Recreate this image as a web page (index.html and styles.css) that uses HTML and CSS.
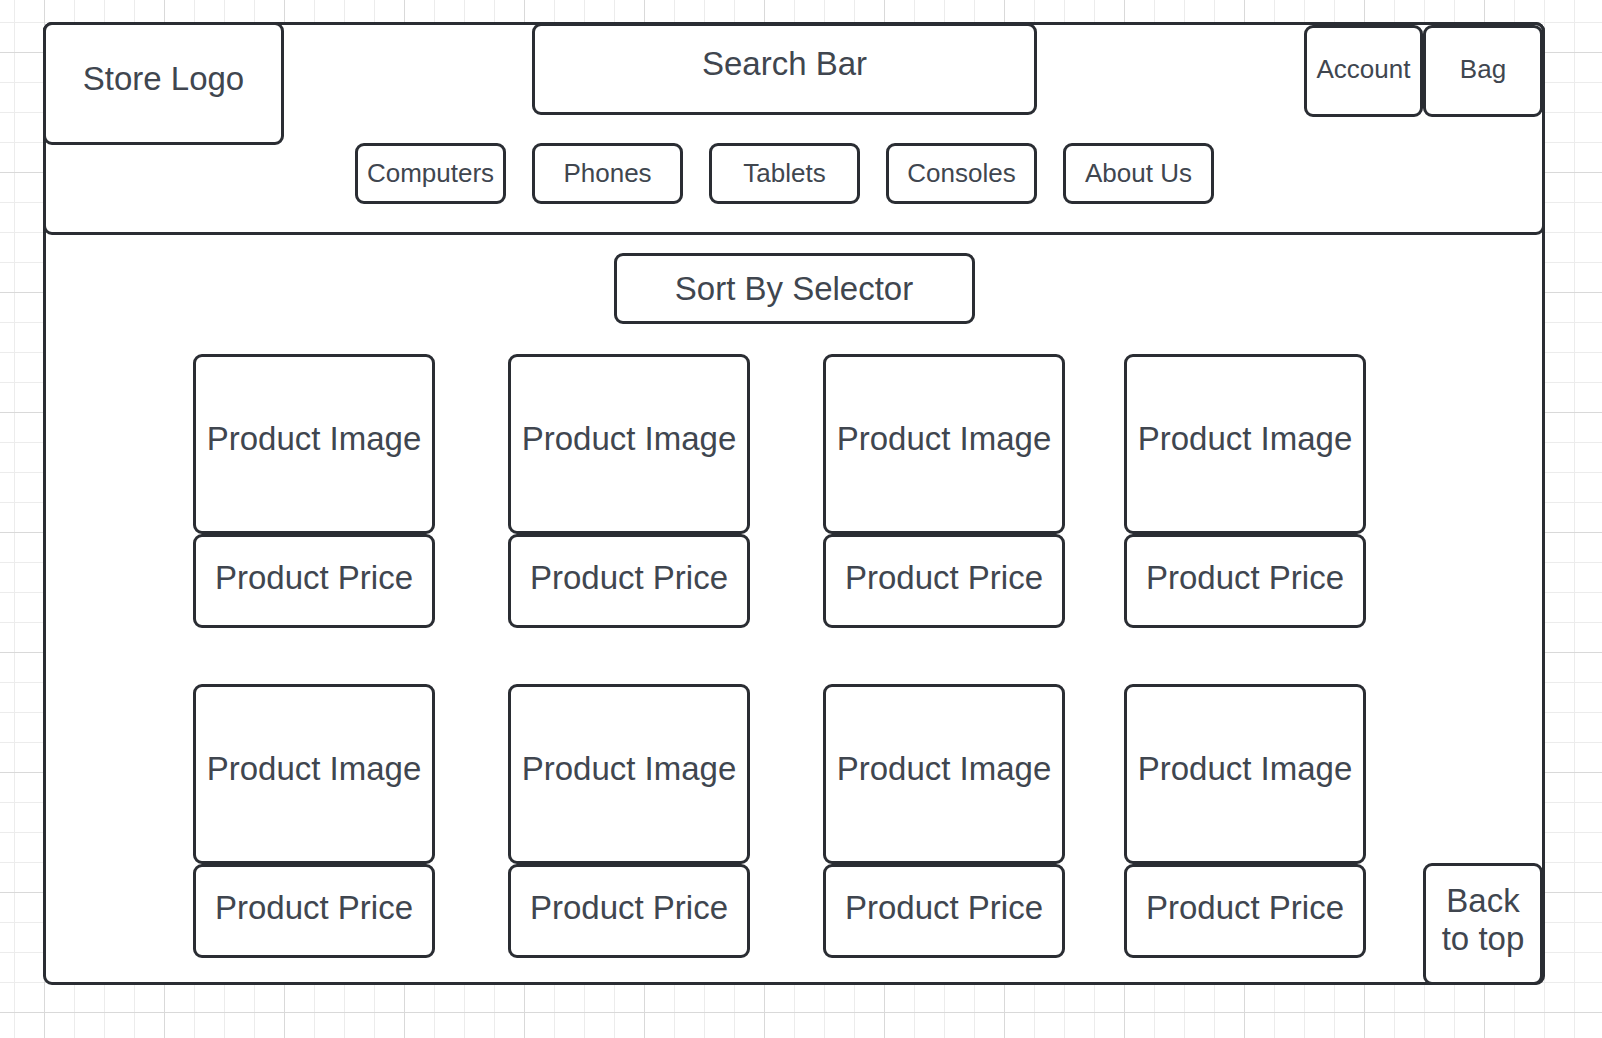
FILE: index.html
```html
<!DOCTYPE html>
<html lang="en">
<head>
  <meta charset="UTF-8" />
  <title>Store - Wireframe</title>
  <meta name="viewport" content="width=device-width, initial-scale=1" />
  <link rel="stylesheet" href="styles.css">
</head>
<body>

<div class="frame">
  <header class="header">
    <div class="top-row">
      <div class="box logo">Store Logo</div>
      <div class="box search">Search Bar</div>
      <div class="user-links">
        <div class="box small">Account</div>
        <div class="box small">Bag</div>
      </div>
    </div>
    <nav class="nav">
      <div class="box nav-item">Computers</div>
      <div class="box nav-item">Phones</div>
      <div class="box nav-item">Tablets</div>
      <div class="box nav-item">Consoles</div>
      <div class="box nav-item">About Us</div>
    </nav>
  </header>

  <div class="box sort">Sort By Selector</div>

  <div class="products">
    <div class="card"><div class="box card-image">Product Image</div><div class="box card-price">Product Price</div></div>
    <div class="card"><div class="box card-image">Product Image</div><div class="box card-price">Product Price</div></div>
    <div class="card"><div class="box card-image">Product Image</div><div class="box card-price">Product Price</div></div>
    <div class="card"><div class="box card-image">Product Image</div><div class="box card-price">Product Price</div></div>
    <div class="card"><div class="box card-image">Product Image</div><div class="box card-price">Product Price</div></div>
    <div class="card"><div class="box card-image">Product Image</div><div class="box card-price">Product Price</div></div>
    <div class="card"><div class="box card-image">Product Image</div><div class="box card-price">Product Price</div></div>
    <div class="card"><div class="box card-image">Product Image</div><div class="box card-price">Product Price</div></div>
  </div>

  <!-- floating button -->
  <div class="box back-top">Back<br>to top</div>
</div>

</body>
</html>
```

FILE: styles.css
```css
* { box-sizing: border-box; font-family: 'Liberation Sans', Arial, sans-serif; }
body {
  margin: 0;
  height: 100vh;
  overflow: hidden;
  background-color: #fff;
  background-image:
    linear-gradient(to right, #d9d9d9 1px, transparent 1px),
    linear-gradient(to bottom, #d9d9d9 1px, transparent 1px),
    linear-gradient(to right, #ececec 1px, transparent 1px),
    linear-gradient(to bottom, #ececec 1px, transparent 1px);
  background-size: 120px 120px, 120px 120px, 30px 30px, 30px 30px;
  background-position: 44px 52px, 44px 52px, 14px 22px, 14px 22px;
}
.frame {
  position: relative;
  margin: 22px 0 0 43px;
  width: 1502px;
  height: 963px;
  background: #fff;
  border: 3px solid #2a2d33;
  border-radius: 9px;
}
.box {
  display: flex;
  align-items: center;
  justify-content: center;
  text-align: center;
  background: #fff;
  border: 3px solid #2a2d33;
  border-radius: 9px;
  color: #40464f;
  font-size: 33px;
}

/* header */
.header {
  margin: -3px -3px 0;
  height: 213px;
  border: 3px solid #2a2d33;
  border-radius: 9px;
}
.top-row {
  display: flex;
  align-items: flex-start;
  height: 118px;
}
.logo {
  margin: -3px 0 0 -3px;
  width: 241px;
  height: 123px;
  padding-bottom: 10px;
}
.search {
  margin: -2px 0 0 248px;
  width: 505px;
  height: 92px;
  padding-bottom: 10px;
}
.user-links {
  display: flex;
  margin: 0 -1px 0 auto;
}
.small {
  width: 119px;
  height: 92px;
  font-size: 26px;
  padding-bottom: 4px;
}
.small + .small { width: 120px; }
.nav {
  display: flex;
  gap: 26px;
  margin-left: 309px;
}
.nav-item {
  width: 151px;
  height: 61px;
  font-size: 26px;
}

/* main */
.sort {
  margin: 18px auto 0;
  width: 361px;
  height: 71px;
}
.products {
  display: grid;
  grid-template-columns: 315px 315px 301px 242px;
  row-gap: 56px;
  margin: 30px 0 0 147px;
}
.card {
  width: 242px;
}
.card-image {
  height: 180px;
  padding-bottom: 10px;
}
.card-price {
  height: 94px;
  padding-bottom: 7px;
}
.back-top {
  position: absolute;
  right: -1px;
  bottom: -3px;
  width: 120px;
  height: 122px;
  line-height: 38px;
  padding-bottom: 8px;
}
```
